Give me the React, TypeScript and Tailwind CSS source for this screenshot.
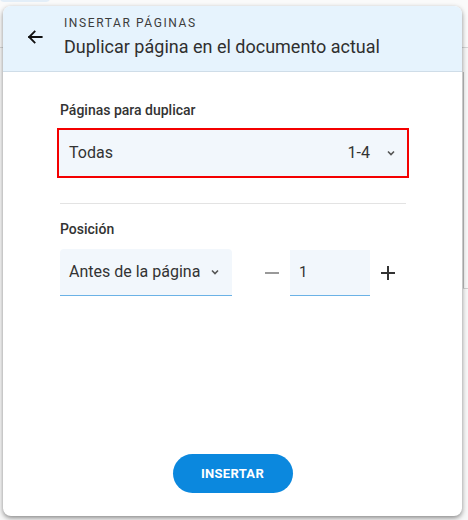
import React from "react";

export default function App() {
  return (
    <div className="relative w-[468px] h-[520px] overflow-hidden bg-[#f7f7f7]" style={{ fontFamily: "Roboto, 'Noto Sans', sans-serif" }}>
      {/* background page hints */}
      <div className="absolute left-0 top-0 w-[468px] h-[47px] bg-[#fafafa]" />
      <div className="absolute left-0 top-[-6px] w-[50px] h-[8px] rounded-full bg-[#e3eef8]" />
      <div className="absolute left-0 top-[47px] w-[468px] h-[1px] bg-[#d6d6d6]" />
      <div className="absolute left-[463px] top-[72px] w-[1px] h-[216px] bg-[#bdbdbd]" />
      <div className="absolute left-[463px] top-[288px] w-[5px] h-[1px] bg-[#cfcfcf]" />

      {/* panel */}
      <div className="absolute left-[3px] top-[6px] w-[459px] h-[510px] rounded-[8px] bg-white overflow-hidden flex flex-col shadow-[0_2px_5px_rgba(0,0,0,0.45)]">
        <div className="h-[66px] bg-[#e6f3fd] border-b border-[#cfdde8] flex items-center">
          <div className="w-[61px] flex justify-center pl-[2px] mt-[-3px]">
            <svg width="20" height="20" viewBox="0 0 24 24" fill="none" stroke="#111" strokeWidth="2.2" strokeLinecap="square">
              <path d="M20 12H5" />
              <path d="M11.5 5.5L5 12l6.5 6.5" />
            </svg>
          </div>
          <div className="flex flex-col">
            <div className="text-[12px] leading-[16px] tracking-[1.6px] text-[#3c3c3c] mt-[-3px]">INSERTAR PÁGINAS</div>
            <div className="text-[18px] leading-[24px] text-[#2f2f2f] mt-[4px]">Duplicar página en el documento actual</div>
          </div>
        </div>

        <div className="flex-1 flex flex-col pl-[57px] pr-[56px]">
          <div className="mt-[29px] text-[14px] leading-[18px] font-medium text-[#333]">Páginas para duplicar</div>
          <div className="mt-[9px] ml-[-3px] mr-[-3px] h-[50px] border-2 border-[#f40000] bg-[#f2f7fc] flex items-center pl-[10px] pr-[11px]">
            <span className="flex-1 text-[16px] text-[#333]">Todas</span>
            <span className="text-[16px] text-[#333] mr-[16px]">1-4</span>
            <svg width="10" height="10" viewBox="0 0 10 10" fill="none" stroke="#555" strokeWidth="1.6">
              <path d="M2 3.5l3 3 3-3" />
            </svg>
          </div>
          <div className="mt-[25px] h-[1px] bg-[#e3e3e3]" />
          <div className="mt-[16px] text-[14px] leading-[18px] font-medium text-[#333]">Posición</div>
          <div className="mt-[11px] flex items-center">
            <div className="w-[172px] h-[47px] rounded-t-[4px] bg-[#f2f7fc] border-b border-[#6bb2e6] flex items-center pl-[9px] pr-[12px]">
              <span className="flex-1 text-[16px] text-[#333]">Antes de la página</span>
              <svg width="10" height="10" viewBox="0 0 10 10" fill="none" stroke="#555" strokeWidth="1.6">
                <path d="M2 3.5l3 3 3-3" />
              </svg>
            </div>
            <div className="ml-[33px] w-[14px] h-[2px] bg-[#999]" />
            <div className="ml-[11px] w-[80px] h-[46px] bg-[#f2f7fc] border-b border-[#6bb2e6] pl-[9px] pt-[11px] text-[15px] text-[#333]">1</div>
            <svg className="ml-[10px]" width="16" height="16" viewBox="0 0 16 16" fill="none" stroke="#333" strokeWidth="2">
              <path d="M8 1v14M1 8h14" />
            </svg>
          </div>
          <div className="flex-1" />
          <div className="flex justify-center mb-[23px] ml-[-1px]">
            <button className="w-[120px] h-[39px] rounded-full bg-[#0b88de] text-white text-[13px] font-bold tracking-[0.3px]">INSERTAR</button>
          </div>
        </div>
      </div>
    </div>
  );
}
